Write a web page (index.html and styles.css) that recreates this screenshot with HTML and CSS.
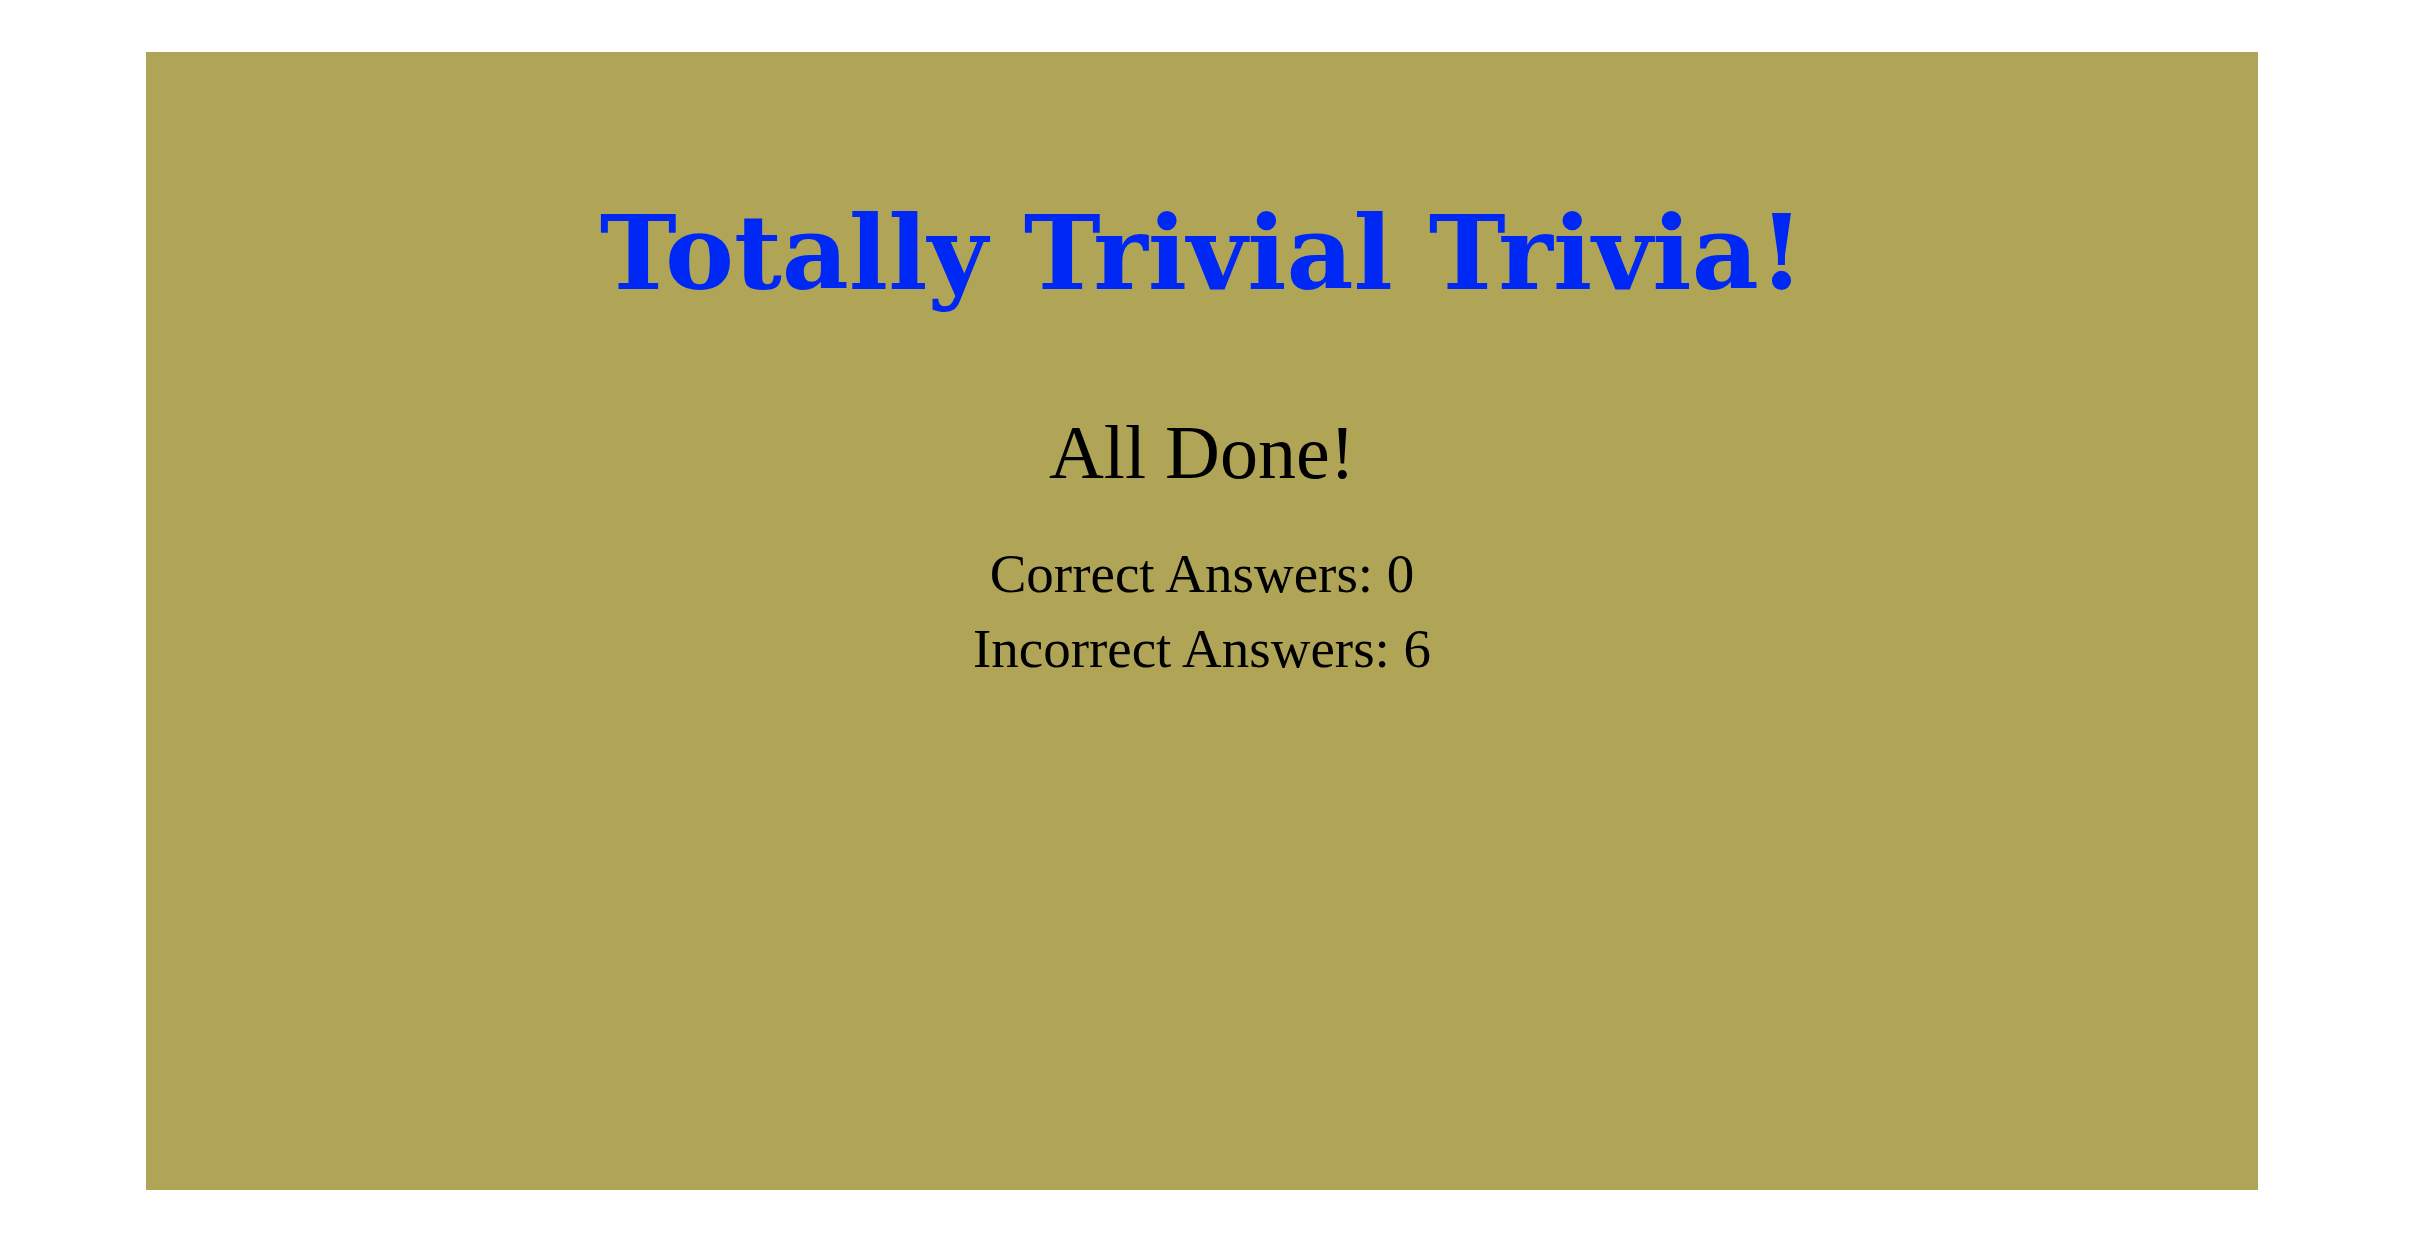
FILE: index.html
```html
<!DOCTYPE html>
<html>
<head>
<meta charset="utf-8">
<title>Totally Trivial Trivia!</title>
<link rel="stylesheet" href="styles.css">
</head>
<body>
<main class="board">
  <h1 class="title">Totally Trivial Trivia!</h1>
  <h2 class="done">All Done!</h2>
  <div class="results">
    <p class="result">Correct Answers: 0</p>
    <p class="result">Incorrect Answers: 6</p>
  </div>
</main>
</body>
</html>
```
FILE: styles.css
```css
html, body {
  margin: 0;
  padding: 0;
  background: #ffffff;
}

body {
  font-family: "Liberation Serif", "Times New Roman", serif;
  color: #000000;
}

.board {
  box-sizing: border-box;
  margin: 52px 0 0 146px;
  width: 2112px;
  height: 1138px;
  background: #b0a556;
  padding-top: 131px;
  display: flex;
  flex-direction: column;
  align-items: center;
  text-align: center;
}

.title {
  margin: 0;
  font-family: "DejaVu Serif", Georgia, serif;
  font-weight: 700;
  font-size: 103.5px;
  line-height: 139px;
  letter-spacing: 0;
  color: #0028f5;
}

.done {
  margin: 85px 0 0;
  font-weight: 400;
  font-size: 76px;
  line-height: 90px;
}

.results {
  margin-top: 39px;
  display: flex;
  flex-direction: column;
  align-items: center;
}

.result {
  margin: 0;
  font-size: 55px;
  line-height: 75px;
}
```
